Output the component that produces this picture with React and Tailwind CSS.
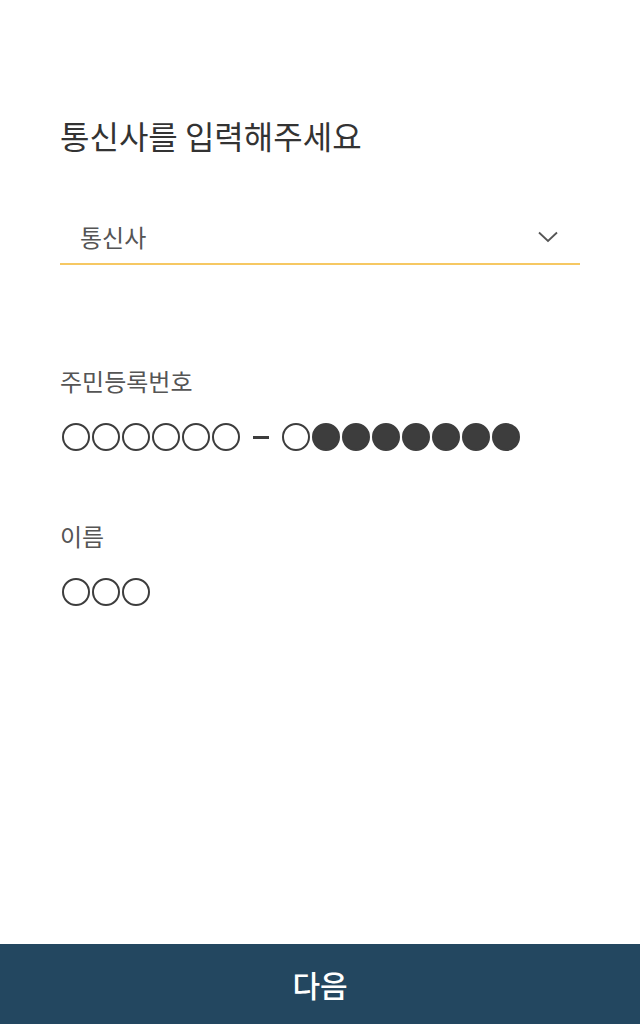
const FONT = { fontFamily: '"Noto Sans CJK KR", "Noto Sans", sans-serif' }

function Dot({ filled }) {
  return (
    <span
      className={
        "block w-[28px] h-[28px] rounded-full border-2 border-[#3d3d3d] " +
        (filled ? "bg-[#3d3d3d]" : "bg-white")
      }
    />
  )
}

function Dots({ count, filled }) {
  return (
    <div className="flex gap-[2px]">
      {Array.from({ length: count }).map((_, i) => (
        <Dot key={i} filled={filled} />
      ))}
    </div>
  )
}

function Chevron() {
  return (
    <svg width="20" height="12" viewBox="0 0 20 12" fill="none">
      <polyline points="1,1.5 10,10 19,1.5" stroke="#555555" strokeWidth="1.8" />
    </svg>
  )
}

export default function App() {
  return (
    <div className="min-h-screen h-[1024px] flex flex-col bg-white" style={FONT}>
      <main className="flex-1 px-[60px] pt-[115px]">
        {/* Title */}
        <h1 className="text-[32px] leading-[40px] text-[#333333] font-normal">
          통신사를 입력해주세요
        </h1>

        {/* Carrier select */}
        <button
          type="button"
          className="mt-[56px] w-full h-[54px] flex items-center justify-between pl-[20px] pr-[22px] border-b-2 border-[#f6c863]"
        >
          <span className="text-[24px] leading-[30px] text-[#555555]">통신사</span>
          <Chevron />
        </button>

        {/* Resident registration number */}
        <div className="mt-[101px]">
          <div className="text-[24px] leading-[30px] text-[#555555]">주민등록번호</div>
          <div className="mt-[27px] ml-[2px] flex items-center">
            <Dots count={6} />
            <span className="block w-[16px] h-[3px] bg-[#3d3d3d] mx-[13px]" />
            <div className="flex gap-[2px]">
              <Dot />
              <Dot filled />
              <Dot filled />
              <Dot filled />
              <Dot filled />
              <Dot filled />
              <Dot filled />
              <Dot filled />
            </div>
          </div>
        </div>

        {/* Name */}
        <div className="mt-[70px]">
          <div className="text-[24px] leading-[30px] text-[#555555]">이름</div>
          <div className="mt-[27px] ml-[2px]">
            <Dots count={3} />
          </div>
        </div>
      </main>

      {/* Next button */}
      <button
        type="button"
        className="h-[80px] w-full bg-[#234760] text-white text-[30px] font-medium flex items-center justify-center"
      >
        다음
      </button>
    </div>
  )
}
